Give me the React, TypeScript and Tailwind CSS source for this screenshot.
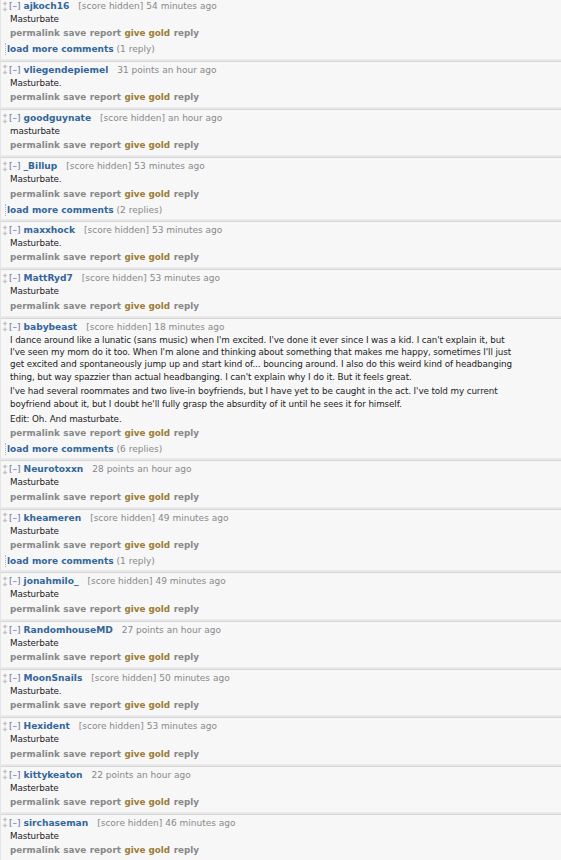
import React from "react";

type Comment = {
  author: string;
  score: string;
  time: string;
  body: string[][];
  more?: string;
};

const comments: Comment[] = [
  { author: "ajkoch16", score: "[score hidden]", time: "54 minutes ago", body: [["Masturbate"]], more: "(1 reply)" },
  { author: "vliegendepiemel", score: "31 points", time: "an hour ago", body: [["Masturbate."]] },
  { author: "goodguynate", score: "[score hidden]", time: "an hour ago", body: [["masturbate"]] },
  { author: "_Billup", score: "[score hidden]", time: "53 minutes ago", body: [["Masturbate."]], more: "(2 replies)" },
  { author: "maxxhock", score: "[score hidden]", time: "53 minutes ago", body: [["Masturbate."]] },
  { author: "MattRyd7", score: "[score hidden]", time: "53 minutes ago", body: [["Masturbate"]] },
  {
    author: "babybeast",
    score: "[score hidden]",
    time: "18 minutes ago",
    body: [
      [
        "I dance around like a lunatic (sans music) when I'm excited. I've done it ever since I was a kid. I can't explain it, but",
        "I've seen my mom do it too. When I'm alone and thinking about something that makes me happy, sometimes I'll just",
        "get excited and spontaneously jump up and start kind of... bouncing around. I also do this weird kind of headbanging",
        "thing, but way spazzier than actual headbanging. I can't explain why I do it. But it feels great.",
      ],
      [
        "I've had several roommates and two live-in boyfriends, but I have yet to be caught in the act. I've told my current",
        "boyfriend about it, but I doubt he'll fully grasp the absurdity of it until he sees it for himself.",
      ],
      ["Edit: Oh. And masturbate."],
    ],
    more: "(6 replies)",
  },
  { author: "Neurotoxxn", score: "28 points", time: "an hour ago", body: [["Masturbate"]] },
  { author: "kheameren", score: "[score hidden]", time: "49 minutes ago", body: [["Masturbate"]], more: "(1 reply)" },
  { author: "jonahmilo_", score: "[score hidden]", time: "49 minutes ago", body: [["Masturbate"]] },
  { author: "RandomhouseMD", score: "27 points", time: "an hour ago", body: [["Masterbate"]] },
  { author: "MoonSnails", score: "[score hidden]", time: "50 minutes ago", body: [["Masturbate."]] },
  { author: "Hexident", score: "[score hidden]", time: "53 minutes ago", body: [["Masturbate"]] },
  { author: "kittykeaton", score: "22 points", time: "an hour ago", body: [["Masterbate"]] },
  { author: "sirchaseman", score: "[score hidden]", time: "46 minutes ago", body: [["Masturbate"]] },
];

function Arrows() {
  return (
    <svg width="6" height="11" viewBox="0 0 6 11" className="shrink-0">
      <path d="M3 0.5 L5.5 3 L3.8 3 L3.8 4.5 L2.2 4.5 L2.2 3 L0.5 3 Z" fill="#c4c4c8" />
      <path d="M3 10.5 L5.5 8 L3.8 8 L3.8 6.5 L2.2 6.5 L2.2 8 L0.5 8 Z" fill="#c4c4c8" />
    </svg>
  );
}

function CommentRow({ c }: { c: Comment }) {
  return (
    <div className="border-t-[2px] border-[#e9e9ea]">
      <div className="border-t border-[#d6d6d8] border-l border-l-[#e4e4e6] bg-[#f7f7f8]">
        <div className="pt-[2px] pb-[4px]">
          {/* tagline */}
          <div className="flex items-center h-[12px] leading-[12px] text-[9px] whitespace-nowrap">
            <div className="w-[8px] pl-[1px] flex items-center">
              <Arrows />
            </div>
            <span className="text-[#6374a0]">[–]</span>
            <span className="ml-[3px] font-bold text-[9.1px] text-[#336699]">{c.author}</span>
            <span className="ml-[9px] text-[#888]">{c.score}</span>
            <span className="ml-[3px] text-[#888]">{c.time}</span>
          </div>

          {/* body */}
          <div className="mt-[1px] pl-[9px] text-[8.75px] tracking-[-0.1px] leading-[12.3px] text-[#222]">
            {c.body.map((para, i) => (
              <div key={i} className={i > 0 ? "mt-[2.5px]" : ""}>
                {para.map((line, j) => (
                  <div key={j} className="whitespace-nowrap">{line}</div>
                ))}
              </div>
            ))}
          </div>

          {/* buttons */}
          <div className="mt-[2px] pl-[9px] flex gap-[3.5px] h-[12px] leading-[12px] text-[8.8px] font-bold text-[#888] whitespace-nowrap">
            <span>permalink</span>
            <span>save</span>
            <span>report</span>
            <span className="text-[#9a7d35]">give gold</span>
            <span>reply</span>
          </div>
        </div>

        {c.more && (
          <div className="pb-[3.5px]">
            <div className="ml-[4px] h-[12px] leading-[12px] border-l border-dotted border-[#aab4cc] pl-[1px] text-[9px] whitespace-nowrap">
              <span className="font-bold text-[#336699]">load more comments</span>
              <span className="ml-[3px] text-[#888]">{c.more}</span>
            </div>
          </div>
        )}
      </div>
    </div>
  );
}

export default function App() {
  return (
    <div
      className="w-[561px] h-[860px] overflow-hidden bg-[#f7f7f8]"
      style={{ fontFamily: '"DejaVu Sans", Verdana, sans-serif' }}
    >
      <div className="-mt-[5px]">
        {comments.map((c, i) => (
          <CommentRow key={i} c={c} />
        ))}
      </div>
    </div>
  );
}
